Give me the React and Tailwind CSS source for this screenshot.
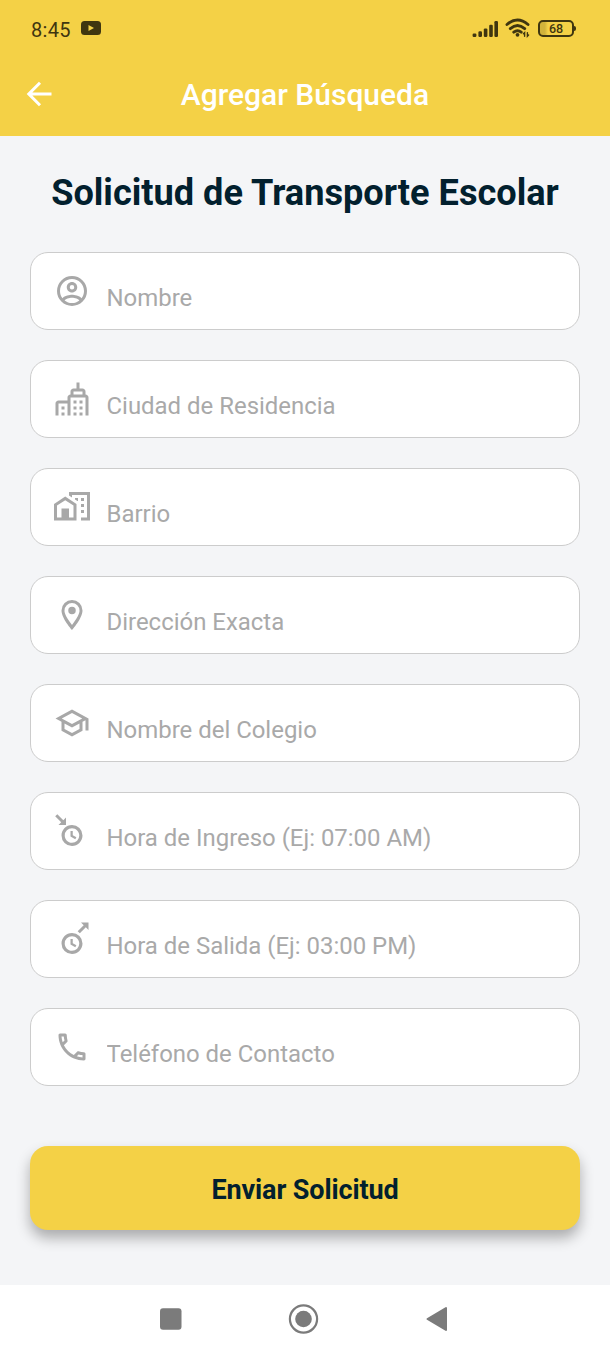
import React, { useState } from "react";

const iconPaths = {
  account:
    "M12,2A10,10 0 0,0 2,12A10,10 0 0,0 12,22A10,10 0 0,0 22,12A10,10 0 0,0 12,2M7.07,18.28C7.5,17.38 10.12,16.5 12,16.5C13.88,16.5 16.5,17.38 16.93,18.28C15.57,19.36 13.86,20 12,20C10.14,20 8.43,19.36 7.07,18.28M18.36,16.83C16.93,15.09 13.46,14.5 12,14.5C10.54,14.5 7.07,15.09 5.64,16.83C4.62,15.5 4,13.82 4,12C4,7.59 7.59,4 12,4C16.41,4 20,7.59 20,12C20,13.82 19.38,15.5 18.36,16.83M12,6C10.06,6 8.5,7.56 8.5,9.5C8.5,11.44 10.06,13 12,13C13.94,13 15.5,11.44 15.5,9.5C15.5,7.56 13.94,6 12,6M12,11A1.5,1.5 0 0,1 10.5,9.5A1.5,1.5 0 0,1 12,8A1.5,1.5 0 0,1 13.5,9.5A1.5,1.5 0 0,1 12,11Z",
  city: "M15 23H13V21H15V23M19 21H17V23H19V21M15 17H13V19H15V17M7 21H5V23H7V21M7 17H5V19H7V17M19 17H17V19H19V17M15 13H13V15H15V13M19 13H17V15H19V13M21 9C22.1 9 23 9.9 23 11V23H21V11H11V23H9V15H3V23H1V15C1 13.9 1.9 13 3 13H9V11C9 9.9 9.9 9 11 9V7C11 5.9 11.9 5 13 5H15V1H17V5H19C20.1 5 21 5.9 21 7V9M19 9V7H13V9H19Z",
  homeCity:
    "M10,2V4.26L12,5.59V4H22V19H18V21H24V2H10M7.5,5L0,10V21H15V10L7.5,5M14,6V6.93L15.61,8H16V6H14M18,6V8H20V6H18M7.5,7.5L13,11V19H10V13H5V19H2V11L7.5,7.5M18,10V12H20V10H18M18,14V16H20V14H18Z",
  marker:
    "M12,6.5A2.5,2.5 0 0,1 14.5,9A2.5,2.5 0 0,1 12,11.5A2.5,2.5 0 0,1 9.5,9A2.5,2.5 0 0,1 12,6.5M12,2A7,7 0 0,1 19,9C19,14.25 12,22 12,22C12,22 5,14.25 5,9A7,7 0 0,1 12,2M12,4A5,5 0 0,0 7,9C7,10 7,12 12,18.71C17,12 17,10 17,9A5,5 0 0,0 12,4Z",
  school:
    "M12 3L1 9L5 11.18V17.18L12 21L19 17.18V11.18L21 10.09V17H23V9L12 3M18.82 9L12 12.72L5.18 9L12 5.28L18.82 9M17 16L12 18.72L7 16V12.27L12 15L17 12.27V16Z",
  clockIn:
    "M2.21,0.79L0.79,2.21L4.8,6.21L3,8H8V3L6.21,4.8M12,8C8.14,8 5,11.13 5,15A7,7 0 0,0 12,22C15.86,22 19,18.87 19,15A7,7 0 0,0 12,8M12,10.15C14.67,10.15 16.85,12.32 16.85,15A4.85,4.85 0 0,1 12,19.85C9.32,19.85 7.15,17.68 7.15,15A4.85,4.85 0 0,1 12,10.15M11,12V15.69L14.19,17.53L14.94,16.23L12.5,14.82V12",
  clockOut:
    "M18,1L19.8,2.79L15.79,6.79L17.21,8.21L21.21,4.21L23,6V1M12,8C8.14,8 5,11.13 5,15A7,7 0 0,0 12,22C15.86,22 19,18.87 19,15A7,7 0 0,0 12,8M12,10.15C14.67,10.15 16.85,12.32 16.85,15A4.85,4.85 0 0,1 12,19.85C9.32,19.85 7.15,17.68 7.15,15A4.85,4.85 0 0,1 12,10.15M11,12V15.69L14.19,17.53L14.94,16.23L12.5,14.82V12",
  phone:
    "M20,15.5C18.8,15.5 17.5,15.3 16.4,14.9C16.3,14.9 16.2,14.9 16.1,14.9C15.8,14.9 15.6,15 15.4,15.2L13.2,17.4C10.4,15.9 8,13.6 6.6,10.8L8.8,8.6C9.1,8.3 9.2,7.9 9,7.6C8.7,6.5 8.5,5.2 8.5,4C8.5,3.5 8,3 7.5,3H4C3.5,3 3,3.5 3,4C3,13.4 10.6,21 20,21C20.5,21 21,20.5 21,20V16.5C21,16 20.5,15.5 20,15.5M5,5H6.5C6.6,5.9 6.8,6.8 7,7.6L5.8,8.8C5.4,7.6 5.1,6.3 5,5M19,19C17.7,18.9 16.4,18.6 15.2,18.2L16.4,17C17.2,17.2 18.1,17.4 19,17.4V19Z",
};

const campos = [
  { name: "nombre", icon: "account", placeholder: "Nombre" },
  { name: "ciudad", icon: "city", placeholder: "Ciudad de Residencia" },
  { name: "barrio", icon: "homeCity", placeholder: "Barrio" },
  { name: "direccion", icon: "marker", placeholder: "Dirección Exacta" },
  { name: "colegio", icon: "school", placeholder: "Nombre del Colegio" },
  { name: "ingreso", icon: "clockIn", placeholder: "Hora de Ingreso (Ej: 07:00 AM)" },
  { name: "salida", icon: "clockOut", placeholder: "Hora de Salida (Ej: 03:00 PM)" },
  { name: "telefono", icon: "phone", placeholder: "Teléfono de Contacto" },
];

const StatusBar = () => (
  <div className="flex h-14 items-center justify-between pl-[31px] pr-[34px] pt-0.5 text-[#3f3610]">
    <div className="flex items-center gap-2.5">
      <span className="pt-px text-[20px] leading-6 tracking-[0.3px]">8:45</span>
      <svg width="20" height="14" viewBox="0 0 20 14" className="-mt-0.5">
        <rect width="20" height="14" rx="3.5" fill="currentColor" />
        <path d="M7.5 4L13 7L7.5 10Z" fill="#f4d146" />
      </svg>
    </div>
    <div className="flex items-center">
      <svg width="27" height="18" viewBox="0 0 27 18" fill="currentColor">
        <rect x="0.6" y="13.6" width="3.8" height="3.4" rx="1.2" />
        <rect x="6.4" y="11.2" width="3.6" height="5.8" rx="1.2" />
        <rect x="11.8" y="8.4" width="3.6" height="8.6" rx="1.2" />
        <rect x="17.2" y="4.8" width="3.6" height="12.2" rx="1.2" />
        <rect x="22.4" y="1" width="3.6" height="16" rx="1.2" />
      </svg>
      <svg width="26" height="20" viewBox="0 0 26 20" fill="none" stroke="currentColor" strokeWidth="2.9" strokeLinecap="round" className="ml-1.5 mr-px -mt-0.5">
        <path d="M2 6.5Q12.5 -2.5 23 6.5M5.3 10.6Q12.5 4.4 19.7 10.6M8.8 14.2Q12.5 11.2 16.2 14.2" />
        <circle cx="12.5" cy="16.8" r="1.9" fill="currentColor" stroke="none" />
        <path d="M19.6 18.2V14.6L18.4 15.8M22.4 14.6V18.2L23.6 17" strokeWidth="1.4" />
      </svg>
      <div className="-mt-0.5 ml-1.5 flex h-[17px] w-[36px] items-center justify-center rounded-[5px] border-2 border-[#3f3610] bg-linear-to-r from-[#d1b33b] from-15% to-transparent to-25% pt-0.5 text-[12.5px] leading-none font-medium">
        68
      </div>
      <div className="-mt-0.5 h-[5px] w-[2px] rounded-r bg-[#3f3610]" />
    </div>
  </div>
);

const Campo = ({ icon, placeholder, value, onChange }) => (
  <label className="flex h-[78px] items-center rounded-[18px] border border-[#cccccc] bg-white pl-[23px] pr-5">
    <svg width="36" height="36" viewBox="0 0 24 24" fill="#a8a8a8" className="shrink-0">
      <path d={iconPaths[icon]} />
    </svg>
    <input
      type="text"
      value={value}
      onChange={onChange}
      placeholder={placeholder}
      className="ml-[16.5px] mt-3.5 h-10 min-w-0 flex-1 bg-transparent text-[23.95px] text-gray-800 outline-none placeholder:text-[#a9a9a9]"
    />
  </label>
);

const App = () => {
  const [form, setForm] = useState({});

  const handleChange = (name) => (e) =>
    setForm({ ...form, [name]: e.target.value });

  return (
    <div className="flex h-[1356px] w-[610px] flex-col bg-[#f4f5f7] font-['Roboto',sans-serif]">
      <header className="h-[136px] bg-[#f4d146]">
        <StatusBar />
        <div className="grid h-[76px] grid-cols-[80px_1fr_80px] items-center">
          <button className="flex pl-[26px]">
            <svg width="26" height="26" viewBox="0 0 26 26" fill="none" stroke="white" strokeWidth="3">
              <path d="M25.5 13H3M14 1.8L2.8 13L14 24.2" />
            </svg>
          </button>
          <h1 className="pt-px text-center text-[30px] font-medium text-white">
            Agregar Búsqueda
          </h1>
        </div>
      </header>

      <main className="flex flex-1 flex-col px-[30px]">
        <h2 className="mt-[33px] text-center text-[36.15px] leading-12 font-bold whitespace-nowrap text-[#02202e]">
          Solicitud de Transporte Escolar
        </h2>
        <form className="mt-[35px] flex flex-col gap-[30px]">
          {campos.map((c) => (
            <Campo
              key={c.name}
              icon={c.icon}
              placeholder={c.placeholder}
              value={form[c.name] || ""}
              onChange={handleChange(c.name)}
            />
          ))}
          <button
            type="button"
            className="mt-[30px] h-[84px] rounded-[18px] bg-[#f4d146] pt-1 text-[27px] font-bold tracking-[-0.12px] text-[#02202e] shadow-[0_8px_14px_rgba(0,0,0,0.3)]"
          >
            Enviar Solicitud
          </button>
        </form>
      </main>

      <nav className="flex h-[71px] bg-white pl-[160px] pt-[18px]">
        <svg width="288" height="32" viewBox="0 0 288 32" fill="#7b7b7b">
          <rect x="0" y="5.3" width="21.5" height="21.5" rx="3" />
          <circle cx="143.5" cy="16" r="13.6" fill="none" stroke="#7b7b7b" strokeWidth="2.2" />
          <circle cx="143.5" cy="16" r="8.3" />
          <path d="M267.5 16L286 5V27Z" stroke="#7b7b7b" strokeWidth="2" strokeLinejoin="round" />
        </svg>
      </nav>
    </div>
  );
};

export default App;
